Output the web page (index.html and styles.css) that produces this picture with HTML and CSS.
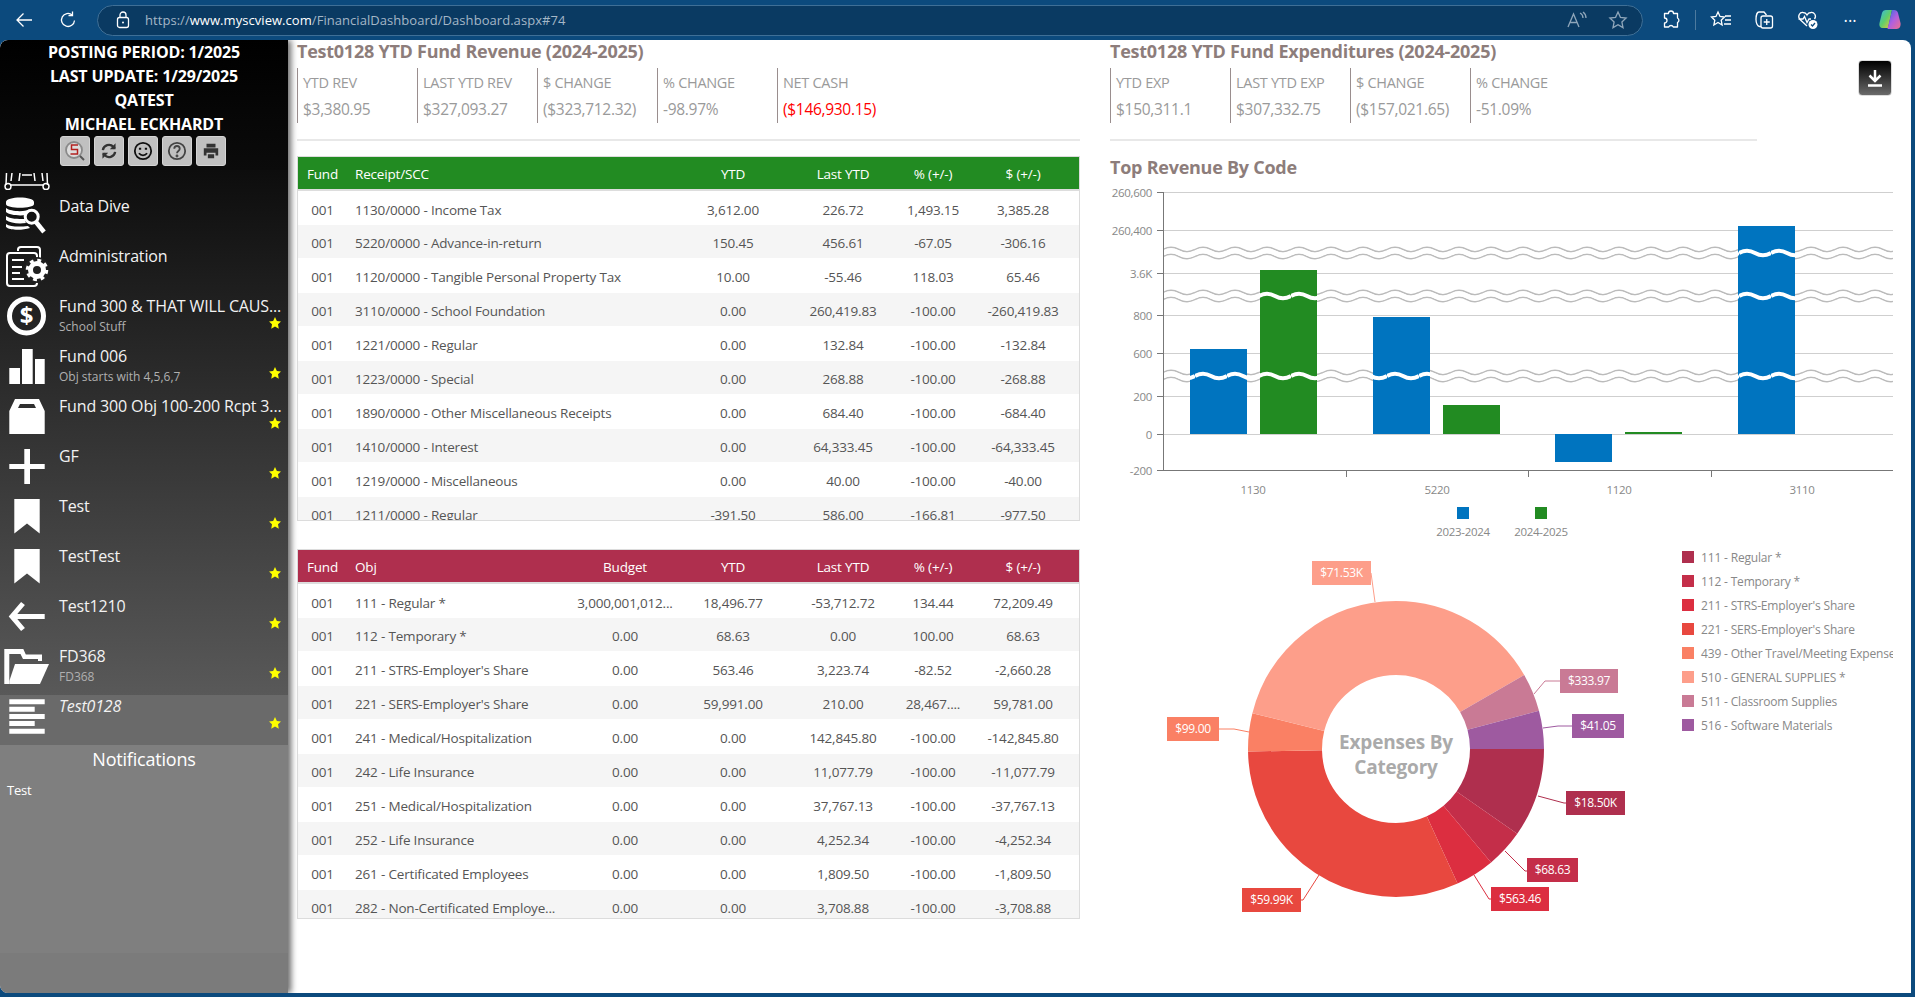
FILE: index.html
```html
<!DOCTYPE html>
<html lang="en">
<head>
<meta charset="utf-8">
<title>Financial Dashboard</title>
<link rel="stylesheet" href="styles.css">
</head>
<body>
<header class="browser">
  <svg class="bicon back" width="20" height="20" viewBox="0 0 20 20"><path d="M18 10H3M9.500 3.500 3 10l6.500 6.500"/></svg>
  <svg class="bicon reload" width="20" height="20" viewBox="0 0 20 20"><path d="M16.500 10.500a6.500 6.500 0 1 1-2.300-5.500M14.500 1.500v4h-4"/></svg>
  <div class="address">
    <svg class="bicon lock" width="16" height="18" viewBox="0 0 16 18"><rect x="2.500" y="6.500" width="11" height="10" rx="2"/><path d="M5 6.500V4a3 3 0 0 1 6 0v2.500"/><circle cx="8" cy="11.500" r="1" class="solid"/></svg>
    <span class="url"><span class="dim">https://</span><span class="host">www.myscview.com</span><span class="dim">/FinancialDashboard/Dashboard.aspx#74</span></span>
    <svg class="bicon faint read" width="22" height="20" viewBox="0 0 22 20"><path d="M2 17 7.500 4 13 17M4 12.500h7M14 3c2 1 3 3 3 5M17 2c2 1.500 3 3.500 3 6"/></svg>
    <svg class="bicon faint" width="20" height="20" viewBox="0 0 20 20"><path d="m10 2 2.400 5.300 5.700.7-4.200 3.900 1.100 5.700-5-2.900-5 2.900 1.100-5.700L1.900 8l5.700-.7z"/></svg>
  </div>
  <svg class="bicon ext" width="20" height="20" viewBox="0 0 20 20"><path d="M7.500 3.500a2.500 2.500 0 0 1 5 0h4v4.500a2.500 2.500 0 0 1 0 4.500V17h-4.200a2.500 2.500 0 0 0-4.600 0H3.500v-4a2.500 2.500 0 0 0 0-5V3.500z" stroke-linejoin="round"/></svg>
  <span class="bsep"></span>
  <svg class="bicon fav" width="22" height="20" viewBox="0 0 22 20"><path d="m8 2 2 4.500 4.500.5-3.300 3.200.9 4.800L8 12.500 3.900 15l.9-4.800L1.500 7 6 6.500zM15 6h6M15 10h6M14 14h7"/></svg>
  <svg class="bicon coll" width="20" height="20" viewBox="0 0 20 20"><path d="M7 16.500H5.500C3.500 16.500 2 13 2 9.500S3 2 5 2h5l2.500 3"/><rect x="7" y="6" width="11.500" height="12" rx="2"/><path d="M12.750 9v6M9.750 12h6"/></svg>
  <svg class="bicon heart" width="22" height="20" viewBox="0 0 22 20"><path d="M10 16 3 9.500C0 6 3 2 6 2.500c2 0 3.500 1.500 4 2.500.5-1 2-2.500 4-2.500 3-.5 6 3 3.500 6.500M1.500 9H6l1.500-2.500 2.500 6L12 9h2"/><circle cx="16" cy="14.500" r="4.500" class="solid"/><path d="m14 14.500 1.500 1.500 2.500-3" stroke="#0c4a7d"/></svg>
  <span class="dots">•••</span>
  <svg class="copilot" width="24" height="24" viewBox="0 0 24 24"><defs><linearGradient id="cpa" x1="0" y1="0" x2="1" y2="1"><stop offset="0" stop-color="#37b8e8"/><stop offset=".5" stop-color="#5fce6a"/><stop offset="1" stop-color="#f5c33b"/></linearGradient><linearGradient id="cpb" x1="0" y1="0" x2="1" y2="1"><stop offset="0" stop-color="#2f6fe0"/><stop offset=".5" stop-color="#b05fe0"/><stop offset="1" stop-color="#f0708a"/></linearGradient></defs><path d="M8 2h6l-4 18H5C2 20 1 18 1.500 15L4 5c.5-2 2-3 4-3z" fill="url(#cpa)"/><path d="M14 2h2c2 0 3.500 1 4 3l2.500 10c.5 3-1 6-4 6h-9z" fill="url(#cpb)"/></svg>
</header>

<div class="app">
  <aside class="sidebar">
    <div class="who">
      <div>POSTING PERIOD: 1/2025</div>
      <div>LAST UPDATE: 1/29/2025</div>
      <div>QATEST</div>
      <div>MICHAEL ECKHARDT</div>
      <div class="tools">
        <span class="tool"><svg width="24" height="26" viewBox="0 0 24 26"><circle cx="11" cy="12" r="8" fill="#ddd" stroke="#8a8a8a" stroke-width="1.800"/><path d="M15 7H8.500v4.500h6V16H7.500" fill="none" stroke="#b3201f" stroke-width="1.500"/><path d="m17 18 4 4" stroke="#555" stroke-width="2"/></svg></span>
        <span class="tool"><svg width="18" height="18" viewBox="0 0 22 22" fill="none" stroke="#333" stroke-width="2.800"><path d="M3.500 10a7.500 7.500 0 0 1 13-4l1.500 2M18.500 12a7.500 7.500 0 0 1-13 4l-1.500-2"/><path d="M19 1.500V9h-7zM3 20.500V13h7z" fill="#333" stroke="none"/></svg></span>
        <span class="tool"><svg width="20" height="20" viewBox="0 0 22 22" fill="none" stroke="#111" stroke-width="2"><circle cx="11" cy="11" r="9"/><path d="M6.500 13.500c2.500 3 6.500 3 9 0M6.500 8.500h2.500M13 8.500h2.500"/></svg></span>
        <span class="tool"><svg width="20" height="20" viewBox="0 0 22 22" fill="none" stroke="#444" stroke-width="2"><circle cx="11" cy="11" r="9"/><path d="M8 8.500c0-4 6-4 6 0 0 2.500-3 2.500-3 5"/><circle cx="11" cy="16.500" r=".6"/></svg></span>
        <span class="tool"><svg width="18" height="18" viewBox="0 0 20 20" fill="#333"><path d="M5 2h10v4H5zM2 7h16v8h-3v-3H5v3H2zM6.500 13.500h7V18h-7z"/></svg></span>
      </div>
    </div>
    <nav class="menu">
      <div class="clipped"><svg width="46" height="17" viewBox="0 0 46 17" fill="none" stroke="#fff" stroke-width="1.500"><path d="M2.500 0 2 12M43 0l.5 12M8 0 7 8M38 0l1 8M18 2h10M7 12h32M16 0l-1 8M30 0l1 8"/><circle cx="4" cy="13.500" r="3"/><circle cx="42" cy="13.500" r="3"/></svg></div>
      <a class="item">
        <svg class="ic" width="50" height="50" viewBox="0 0 50 50"><path fill="#fff" d="M3 7c0-6 28-6 28 0v2c0 5-28 5-28 0zM3 13c5 4 20 4 25 1a11 11 0 0 0-5 6c-7 1-17 0-20-3zM3 21c4 3 12 3 19 3 0 2 .5 3 1 4-8 1-16 0-20-3zM3 29c4 3 14 3 22 2l2 2c-9 3-21 2-24-1z"/><circle cx="28.700" cy="21.700" r="6.500" fill="none" stroke="#fff" stroke-width="3"/><path d="m33 27 8 10" stroke="#fff" stroke-width="4.500"/></svg>
        <div class="txt"><div class="name">Data Dive</div></div>
      </a>
      <a class="item">
        <svg class="ic" width="50" height="50" viewBox="0 0 50 50" fill="none" stroke="#fff" stroke-width="2"><path d="M15 6V4.500C15 3 16 2 18 2h16c2 0 3 1 3 3v8"/><rect x="4" y="8" width="30" height="33" rx="3"/><path d="M9 15h12M9 22h10M9 28h8M9 34h12"/><circle cx="34" cy="25" r="13" fill="#1f1f1f" stroke="none"/><circle cx="34" cy="25" r="6.500" stroke-width="5"/><circle cx="34" cy="25" r="9.500" stroke-width="3.500" stroke-dasharray="3.730 3.730"/></svg>
        <div class="txt"><div class="name">Administration</div></div>
      </a>
      <a class="item">
        <svg class="ic" width="50" height="50" viewBox="0 0 50 50"><circle cx="23.500" cy="21" r="17" fill="none" stroke="#fff" stroke-width="5"/><text x="23.500" y="29" text-anchor="middle" class="dollar">$</text></svg>
        <div class="txt"><div class="name">Fund 300 &amp; THAT WILL CAUS...</div><div class="sub">School Stuff</div></div>
        <svg class="star" width="12" height="12" viewBox="0 0 24 24"><path d="m12 0 3.700 7.800 8.300 1-6 5.900 1.500 8.800-7.500-4.300-7.500 4.300L6 14.700 0 8.800l8.300-1z"/></svg>
      </a>
      <a class="item">
        <svg class="ic" width="50" height="50" viewBox="0 0 50 50" fill="#fff"><path d="M6.300 23H17v16H6.300zM19 4h10.700v35H19zM32 14h9.700v25H32z"/></svg>
        <div class="txt"><div class="name">Fund 006</div><div class="sub">Obj starts with 4,5,6,7</div></div>
        <svg class="star" width="12" height="12" viewBox="0 0 24 24"><path d="m12 0 3.700 7.800 8.300 1-6 5.900 1.500 8.800-7.500-4.300-7.500 4.300L6 14.700 0 8.800l8.300-1z"/></svg>
      </a>
      <a class="item">
        <svg class="ic" width="50" height="50" viewBox="0 0 50 50" fill="#fff"><path fill-rule="evenodd" d="M6.300 39V16L12 4h24l5.700 12v23zM15 13h18l-2-4H17z"/></svg>
        <div class="txt"><div class="name">Fund 300 Obj 100-200 Rcpt 3...</div></div>
        <svg class="star" width="12" height="12" viewBox="0 0 24 24"><path d="m12 0 3.700 7.800 8.300 1-6 5.900 1.500 8.800-7.500-4.300-7.500 4.300L6 14.700 0 8.800l8.300-1z"/></svg>
      </a>
      <a class="item">
        <svg class="ic" width="50" height="50" viewBox="0 0 50 50" fill="#fff"><path d="M21.300 4H27v15h14.700v5H27v15h-5.700V24H6.300v-5h15z"/></svg>
        <div class="txt"><div class="name">GF</div></div>
        <svg class="star" width="12" height="12" viewBox="0 0 24 24"><path d="m12 0 3.700 7.800 8.300 1-6 5.900 1.500 8.800-7.500-4.300-7.500 4.300L6 14.700 0 8.800l8.300-1z"/></svg>
      </a>
      <a class="item">
        <svg class="ic" width="50" height="50" viewBox="0 0 50 50" fill="#fff"><path d="M11.300 4h25.400v34.500L24 28.500l-12.700 10z"/></svg>
        <div class="txt"><div class="name">Test</div></div>
        <svg class="star" width="12" height="12" viewBox="0 0 24 24"><path d="m12 0 3.700 7.800 8.300 1-6 5.900 1.500 8.800-7.500-4.300-7.500 4.300L6 14.700 0 8.800l8.300-1z"/></svg>
      </a>
      <a class="item">
        <svg class="ic" width="50" height="50" viewBox="0 0 50 50" fill="#fff"><path d="M11.300 4h25.400v34.500L24 28.500l-12.700 10z"/></svg>
        <div class="txt"><div class="name">TestTest</div></div>
        <svg class="star" width="12" height="12" viewBox="0 0 24 24"><path d="m12 0 3.700 7.800 8.300 1-6 5.900 1.500 8.800-7.500-4.300-7.500 4.300L6 14.700 0 8.800l8.300-1z"/></svg>
      </a>
      <a class="item">
        <svg class="ic" width="50" height="50" viewBox="0 0 50 50" fill="none" stroke="#fff" stroke-width="5"><path d="M41.700 21.500H11M20 8.500 9 21.500l11 13"/></svg>
        <div class="txt"><div class="name">Test1210</div></div>
        <svg class="star" width="12" height="12" viewBox="0 0 24 24"><path d="m12 0 3.700 7.800 8.300 1-6 5.900 1.500 8.800-7.500-4.300-7.500 4.300L6 14.700 0 8.800l8.300-1z"/></svg>
      </a>
      <a class="item">
        <svg class="ic" width="50" height="50" viewBox="0 0 50 50" fill="#fff"><path fill-rule="evenodd" d="M1.300 4h19l2.500 5.500H39V16h-4v-2H20l-2.500-5H6.300v30h-5z"/><path d="M12 19h34L37 39H6.300v-3z"/></svg>
        <div class="txt"><div class="name">FD368</div><div class="sub">FD368</div></div>
        <svg class="star" width="12" height="12" viewBox="0 0 24 24"><path d="m12 0 3.700 7.800 8.300 1-6 5.900 1.500 8.800-7.500-4.300-7.500 4.300L6 14.700 0 8.800l8.300-1z"/></svg>
      </a>
      <a class="item selected">
        <svg class="ic" width="50" height="50" viewBox="0 0 50 50" fill="#fff"><path d="M6.300 4.300h35.400v5H6.300zM6.300 11.700h25.400v5H6.300zM6.300 19h35.400v5H6.300zM6.300 26h25.400v5H6.300zM6.300 33.700h35.400v5H6.300z"/></svg>
        <div class="txt"><div class="name">Test0128</div></div>
        <svg class="star" width="12" height="12" viewBox="0 0 24 24"><path d="m12 0 3.700 7.800 8.300 1-6 5.900 1.500 8.800-7.500-4.300-7.500 4.300L6 14.700 0 8.800l8.300-1z"/></svg>
      </a>
    </nav>
    <section class="notes">
      <h3>Notifications</h3>
      <p>Test</p>
    </section>
    <div class="foot"></div>
  </aside>

  <main class="main">
    <button class="download" type="button" aria-label="Download"><svg width="18" height="20" viewBox="0 0 18 20" fill="none" stroke="#fff" stroke-width="2.500"><path d="M9 2v10M3.500 7.500 9 13l5.500-5.500M2 17.500h14"/></svg></button>
    <section class="col">
      <h2>Test0128 YTD Fund Revenue (2024-2025)</h2>
      <div class="stats">
        <div class="stat"><div>YTD REV</div><div>$3,380.95</div></div>
        <div class="stat"><div>LAST YTD REV</div><div>$327,093.27</div></div>
        <div class="stat"><div>$ CHANGE</div><div>($323,712.32)</div></div>
        <div class="stat"><div>% CHANGE</div><div>-98.97%</div></div>
        <div class="stat"><div>NET CASH</div><div class="neg">($146,930.15)</div></div>
      </div>
      <div class="rule"></div>
      <div class="tablewrap rev">
        <table>
          <colgroup><col class="c-fund"><col class="c-wide"><col class="c-ytd"><col class="c-last"><col class="c-pct"><col class="c-amt"></colgroup>
          <thead class="green"><tr><th>Fund</th><th class="l">Receipt/SCC</th><th>YTD</th><th>Last YTD</th><th>% (+/-)</th><th>$ (+/-)</th></tr></thead>
          <tbody>
            <tr><td>001</td><td class="l">1130/0000 - Income Tax</td><td>3,612.00</td><td>226.72</td><td>1,493.15</td><td>3,385.28</td></tr>
            <tr><td>001</td><td class="l">5220/0000 - Advance-in-return</td><td>150.45</td><td>456.61</td><td>-67.05</td><td>-306.16</td></tr>
            <tr><td>001</td><td class="l">1120/0000 - Tangible Personal Property Tax</td><td>10.00</td><td>-55.46</td><td>118.03</td><td>65.46</td></tr>
            <tr><td>001</td><td class="l">3110/0000 - School Foundation</td><td>0.00</td><td>260,419.83</td><td>-100.00</td><td>-260,419.83</td></tr>
            <tr><td>001</td><td class="l">1221/0000 - Regular</td><td>0.00</td><td>132.84</td><td>-100.00</td><td>-132.84</td></tr>
            <tr><td>001</td><td class="l">1223/0000 - Special</td><td>0.00</td><td>268.88</td><td>-100.00</td><td>-268.88</td></tr>
            <tr><td>001</td><td class="l">1890/0000 - Other Miscellaneous Receipts</td><td>0.00</td><td>684.40</td><td>-100.00</td><td>-684.40</td></tr>
            <tr><td>001</td><td class="l">1410/0000 - Interest</td><td>0.00</td><td>64,333.45</td><td>-100.00</td><td>-64,333.45</td></tr>
            <tr><td>001</td><td class="l">1219/0000 - Miscellaneous</td><td>0.00</td><td>40.00</td><td>-100.00</td><td>-40.00</td></tr>
            <tr><td>001</td><td class="l">1211/0000 - Regular</td><td>-391.50</td><td>586.00</td><td>-166.81</td><td>-977.50</td></tr>
          </tbody>
        </table>
      </div>
      <div class="tablewrap exp">
        <table>
          <colgroup><col class="c-fund"><col class="c-name"><col class="c-bud"><col class="c-ytd"><col class="c-last"><col class="c-pct"><col class="c-amt"></colgroup>
          <thead class="rose"><tr><th>Fund</th><th class="l">Obj</th><th>Budget</th><th>YTD</th><th>Last YTD</th><th>% (+/-)</th><th>$ (+/-)</th></tr></thead>
          <tbody>
            <tr><td>001</td><td class="l">111 - Regular *</td><td>3,000,001,012...</td><td>18,496.77</td><td>-53,712.72</td><td>134.44</td><td>72,209.49</td></tr>
            <tr><td>001</td><td class="l">112 - Temporary *</td><td>0.00</td><td>68.63</td><td>0.00</td><td>100.00</td><td>68.63</td></tr>
            <tr><td>001</td><td class="l">211 - STRS-Employer's Share</td><td>0.00</td><td>563.46</td><td>3,223.74</td><td>-82.52</td><td>-2,660.28</td></tr>
            <tr><td>001</td><td class="l">221 - SERS-Employer's Share</td><td>0.00</td><td>59,991.00</td><td>210.00</td><td>28,467....</td><td>59,781.00</td></tr>
            <tr><td>001</td><td class="l">241 - Medical/Hospitalization</td><td>0.00</td><td>0.00</td><td>142,845.80</td><td>-100.00</td><td>-142,845.80</td></tr>
            <tr><td>001</td><td class="l">242 - Life Insurance</td><td>0.00</td><td>0.00</td><td>11,077.79</td><td>-100.00</td><td>-11,077.79</td></tr>
            <tr><td>001</td><td class="l">251 - Medical/Hospitalization</td><td>0.00</td><td>0.00</td><td>37,767.13</td><td>-100.00</td><td>-37,767.13</td></tr>
            <tr><td>001</td><td class="l">252 - Life Insurance</td><td>0.00</td><td>0.00</td><td>4,252.34</td><td>-100.00</td><td>-4,252.34</td></tr>
            <tr><td>001</td><td class="l">261 - Certificated Employees</td><td>0.00</td><td>0.00</td><td>1,809.50</td><td>-100.00</td><td>-1,809.50</td></tr>
            <tr><td>001</td><td class="l">282 - Non-Certificated Employe...</td><td>0.00</td><td>0.00</td><td>3,708.88</td><td>-100.00</td><td>-3,708.88</td></tr>
          </tbody>
        </table>
      </div>
    </section>

    <section class="col">
      <h2>Test0128 YTD Fund Expenditures (2024-2025)</h2>
      <div class="stats">
        <div class="stat"><div>YTD EXP</div><div>$150,311.1</div></div>
        <div class="stat"><div>LAST YTD EXP</div><div>$307,332.75</div></div>
        <div class="stat"><div>$ CHANGE</div><div>($157,021.65)</div></div>
        <div class="stat"><div>% CHANGE</div><div>-51.09%</div></div>
      </div>
      <div class="rule short"></div>
      <h2 class="chart-title">Top Revenue By Code</h2>
      <svg class="chart" width="783" height="360" viewBox="1110 185 783 360">
        <defs>
          <pattern id="waveGrey" patternUnits="userSpaceOnUse" x="1163" y="-10" width="32" height="20">
            <path d="M0 6.500q8-4.500 16 0t16 0M0 13.500q8-4.500 16 0t16 0" fill="none" stroke="#bbb" stroke-width="1.500"/>
            <path d="M0 10q8-4.500 16 0t16 0" fill="none" stroke="#fff" stroke-width="5"/>
          </pattern>
          <pattern id="waveWhite" patternUnits="userSpaceOnUse" x="1163" y="-10" width="32" height="20">
            <path d="M0 10q8-4.500 16 0t16 0" fill="none" stroke="#fff" stroke-width="4"/>
          </pattern>
        </defs>
        <g class="grid">
          <path d="M1163 192.500H1893M1163 230.500H1893M1163 273.500H1893M1163 315.500H1893M1163 353.500H1893M1163 396.500H1893M1163 434.500H1893"/>
        </g>
        <rect transform="translate(0 253)" x="1163" y="-10" width="730" height="20" fill="url(#waveGrey)"/>
        <rect transform="translate(0 296)" x="1163" y="-10" width="730" height="20" fill="url(#waveGrey)"/>
        <rect transform="translate(0 376)" x="1163" y="-10" width="730" height="20" fill="url(#waveGrey)"/>
        <g class="blue">
          <rect x="1190" y="349" width="57" height="85"/>
          <rect x="1373" y="317" width="57" height="117"/>
          <rect x="1555" y="434" width="57" height="28"/>
          <rect x="1738" y="226" width="57" height="208"/>
        </g>
        <g class="grn">
          <rect x="1260" y="270" width="57" height="164"/>
          <rect x="1443" y="405" width="57" height="29"/>
          <rect x="1625" y="432" width="57" height="2"/>
        </g>
        <rect transform="translate(0 253)" x="1163" y="-10" width="730" height="20" fill="url(#waveWhite)"/>
        <rect transform="translate(0 296)" x="1163" y="-10" width="730" height="20" fill="url(#waveWhite)"/>
        <rect transform="translate(0 376)" x="1163" y="-10" width="730" height="20" fill="url(#waveWhite)"/>
        <path class="axis" d="M1157 192.500h6.500M1157 230.500h6.500M1157 273.500h6.500M1157 315.500h6.500M1157 353.500h6.500M1157 396.500h6.500M1157 434.500h6.500M1157 470.500H1893M1163.500 192V471M1346.500 471v6M1528.500 471v6M1711.500 471v6"/>
        <g class="ylab">
          <text x="1152" y="196.500">260,600</text>
          <text x="1152" y="234.500">260,400</text>
          <text x="1152" y="277.500">3.6K</text>
          <text x="1152" y="319.500">800</text>
          <text x="1152" y="357.500">600</text>
          <text x="1152" y="400.500">200</text>
          <text x="1152" y="438.500">0</text>
          <text x="1152" y="474.500">-200</text>
        </g>
        <g class="xlab">
          <text x="1253" y="494">1130</text>
          <text x="1437" y="494">5220</text>
          <text x="1619" y="494">1120</text>
          <text x="1802" y="494">3110</text>
          <text x="1463" y="536">2023-2024</text>
          <text x="1541" y="536">2024-2025</text>
        </g>
        <rect class="sq-blue" x="1457" y="507" width="12" height="12"/>
        <rect class="sq-green" x="1535" y="507" width="12" height="12"/>
      </svg>
      <svg class="donut" width="783" height="385" viewBox="1110 545 783 385">
        <g class="slices">
          <circle cx="1396" cy="749" r="111" pathLength="360" stroke="#af2f4e" stroke-dasharray="35 325" stroke-dashoffset="0"/>
          <circle cx="1396" cy="749" r="111" pathLength="360" stroke="#c42e49" stroke-dasharray="15 345" stroke-dashoffset="-35"/>
          <circle cx="1396" cy="749" r="111" pathLength="360" stroke="#dc2e40" stroke-dasharray="15.400 344.600" stroke-dashoffset="-50"/>
          <circle cx="1396" cy="749" r="111" pathLength="360" stroke="#e8483f" stroke-dasharray="113.600 246.400" stroke-dashoffset="-65.400"/>
          <circle cx="1396" cy="749" r="111" pathLength="360" stroke="#fa8064" stroke-dasharray="15 345" stroke-dashoffset="-179"/>
          <circle cx="1396" cy="749" r="111" pathLength="360" stroke="#fd9e8a" stroke-dasharray="136 224" stroke-dashoffset="-194"/>
          <circle cx="1396" cy="749" r="111" pathLength="360" stroke="#c97a95" stroke-dasharray="15 345" stroke-dashoffset="-330"/>
          <circle cx="1396" cy="749" r="111" pathLength="360" stroke="#9e5aa0" stroke-dasharray="15 345" stroke-dashoffset="-345"/>
        </g>
        <g class="leaders">
          <path stroke="#fd9e8a" d="M1371 573 1375 602"/>
          <path stroke="#c97a95" d="M1560 681H1545L1534 694"/>
          <path stroke="#9e5aa0" d="M1572 726H1558L1543 728"/>
          <path stroke="#af2f4e" d="M1566 803H1564L1538 796"/>
          <path stroke="#c42e49" d="M1527 871H1525L1505 851"/>
          <path stroke="#dc2e40" d="M1491 899H1489L1474 875"/>
          <path stroke="#e8483f" d="M1301 900H1303L1319 875"/>
          <path stroke="#fa8064" d="M1219 729H1234L1249 732"/>
        </g>
        <text class="center" x="1396" y="749"><tspan x="1396" dy="0">Expenses By</tspan><tspan x="1396" dy="25">Category</tspan></text>
        <g class="tag">
          <rect x="1312" y="561" width="59" height="24" fill="#fd9e8a"/><text x="1341.500" y="577">$71.53K</text>
          <rect x="1560" y="669" width="58" height="24" fill="#c97a95"/><text x="1589" y="685">$333.97</text>
          <rect x="1572" y="714" width="52" height="24" fill="#9e5aa0"/><text x="1598" y="730">$41.05</text>
          <rect x="1566" y="791" width="59" height="24" fill="#af2f4e"/><text x="1595.500" y="807">$18.50K</text>
          <rect x="1527" y="858" width="51" height="24" fill="#c42e49"/><text x="1552.500" y="874">$68.63</text>
          <rect x="1491" y="887" width="58" height="24" fill="#dc2e40"/><text x="1520" y="903">$563.46</text>
          <rect x="1242" y="888" width="59" height="24" fill="#e8483f"/><text x="1271.500" y="904">$59.99K</text>
          <rect x="1167" y="717" width="52" height="24" fill="#fa8064"/><text x="1193" y="733">$99.00</text>
        </g>
        <g class="legend">
          <rect x="1682" y="551" width="12" height="12" fill="#af2f4e"/><text x="1701" y="561.500">111 - Regular *</text>
          <rect x="1682" y="575" width="12" height="12" fill="#c42e49"/><text x="1701" y="585.500">112 - Temporary *</text>
          <rect x="1682" y="599" width="12" height="12" fill="#dc2e40"/><text x="1701" y="609.500">211 - STRS-Employer's Share</text>
          <rect x="1682" y="623" width="12" height="12" fill="#e8483f"/><text x="1701" y="633.500">221 - SERS-Employer's Share</text>
          <rect x="1682" y="647" width="12" height="12" fill="#fa8064"/><text x="1701" y="657.500">439 - Other Travel/Meeting Expense</text>
          <rect x="1682" y="671" width="12" height="12" fill="#fd9e8a"/><text x="1701" y="681.500">510 - GENERAL SUPPLIES *</text>
          <rect x="1682" y="695" width="12" height="12" fill="#c97a95"/><text x="1701" y="705.500">511 - Classroom Supplies</text>
          <rect x="1682" y="719" width="12" height="12" fill="#9e5aa0"/><text x="1701" y="729.500">516 - Software Materials</text>
        </g>
      </svg>
    </section>
  </main>
</div>
</body>
</html>
```

FILE: styles.css
```css
* { box-sizing: border-box; }
html, body { margin: 0; height: 100%; }
body {
  height: 997px;
  overflow: hidden;
  display: flex;
  flex-direction: column;
  background: #0c4a7d;
  font-family: "Open Sans", "Noto Sans", sans-serif;
}

/* browser chrome */
.browser {
  height: 40px;
  flex: none;
  display: flex;
  align-items: center;
  padding-left: 14px;
}
.bicon { fill: none; stroke: #fff; stroke-width: 1.3; flex: none; }
.bicon .solid { fill: #fff; stroke: none; }
.bicon.faint { stroke: #8fa6ba; }
.reload { margin-left: 24px; }
.address {
  margin-left: 19px;
  width: 1546px;
  height: 31px;
  display: flex;
  align-items: center;
  padding-left: 17px;
  padding-right: 14px;
  background: #0a3a62;
  border: 1px solid #3f6f96;
  border-radius: 16px;
}
.url { margin-left: 14px; flex: 1; font-size: 13px; letter-spacing: 0.05px; white-space: nowrap; }
.url .dim { color: #a5b7c7; }
.url .host { color: #fff; }
.read { margin-right: 20px; }
.ext { margin-left: 18px; }
.bsep { width: 1px; height: 20px; background: #4d7a9e; margin-left: 14px; }
.fav { margin-left: 14px; }
.coll { margin-left: 22px; }
.heart { margin-left: 23px; }
.dots { margin-left: 25px; color: #fff; font-size: 9px; letter-spacing: 1px; }
.copilot { margin-left: 21px; flex: none; }

/* app */
.app {
  flex: 1;
  min-height: 0;
  display: flex;
  margin-right: 4px;
  margin-bottom: 4px;
  background: #fff;
  border-radius: 8px 8px 0 8px;
  overflow: hidden;
}

/* sidebar */
.sidebar {
  width: 288px;
  flex: none;
  display: flex;
  flex-direction: column;
  color: #fff;
  background: #7f7f7f;
  box-shadow: 3px 0 6px rgba(0, 0, 0, .6);
  z-index: 2;
  border-radius: 8px 0 0 8px;
  overflow: hidden;
}
.who {
  height: 130px;
  flex: none;
  text-align: center;
  font-weight: 700;
  font-size: 16px;
  line-height: 24px;
  letter-spacing: -0.15px;
  background: linear-gradient(#000, #0b0b0b);
}
.tools { display: flex; justify-content: center; gap: 4px; padding-right: 2px; }
.tool {
  width: 30px;
  height: 30px;
  display: flex;
  align-items: center;
  justify-content: center;
  background: #c0c0c0;
  border: 1px solid #d4d4d4;
  border-radius: 3px;
}
.menu {
  height: 575px;
  flex: none;
  background: linear-gradient(#0d0d0d, #606060);
  overflow: hidden;
}
.clipped { height: 25px; padding: 3px 0 0 4px; }
.clipped svg { display: block; }
.item {
  position: relative;
  height: 50px;
  display: flex;
  padding-left: 3px;
}
.item.selected { background: #6a6a6a; font-style: italic; }
.ic { flex: none; }
.txt { margin-left: 6px; white-space: nowrap; }
.name { font-size: 16px; line-height: 22px; letter-spacing: -0.15px; font-weight: 400; color: #f2f2f2; }
.sub { font-size: 12px; line-height: 19px; color: #b0b0b0; }
.star { position: absolute; left: 269px; top: 22px; fill: #ffff00; }
.dollar { font-family: "Open Sans", sans-serif; font-weight: 700; font-size: 24px; fill: #fff; }
.notes { height: 208px; flex: none; background: #7f7f7f; }
.notes h3 { margin: 0; padding-top: 2px; text-align: center; font-size: 18px; line-height: 25px; font-weight: 400; letter-spacing: -0.2px; }
.notes p { margin: 9px 0 0 7px; font-size: 13px; line-height: 18px; letter-spacing: -0.2px; }
.foot { flex: 1; background: #7b7b7b; }

/* main */
.main {
  position: relative;
  flex: 1;
  display: flex;
  gap: 30px;
  padding-left: 9px;
  min-width: 0;
}
.col { width: 783px; flex: none; }
h2 {
  margin: 0;
  font-size: 18px;
  line-height: 22px;
  font-weight: 700;
  letter-spacing: -0.25px;
  color: #8d7d7b;
  white-space: nowrap;
}
.stats { display: flex; margin-top: 6px; height: 55px; }
.stat {
  width: 120px;
  border-left: 1px solid #9a8e8e;
  padding-left: 5px;
  color: #9a9a9a;
  font-size: 15.500px;
  line-height: 26px;
  letter-spacing: -0.3px;
  white-space: nowrap;
}
.stat div:first-child { font-size: 14.500px; margin-top: 2px; }
.stat .neg { color: #f00; }
.rule { height: 2px; margin-top: 16px; background: #e8e8e8; }
.rule.short { width: 647px; }
.tablewrap {
  margin-top: 15px;
  border: 1px solid #dcdcdc;
  height: 365px;
  overflow: hidden;
}
.tablewrap.exp { margin-top: 28px; height: 370px; }
table { width: 781px; border-collapse: collapse; table-layout: fixed; font-size: 13.500px; color: #555; letter-spacing: -0.18px; }
.c-fund { width: 49px; }
.c-wide { width: 332px; }
.c-name { width: 224px; }
.c-bud { width: 108px; }
.c-ytd { width: 108px; }
.c-last { width: 112px; }
.c-pct { width: 68px; }
.c-amt { width: 112px; }
th {
  height: 33px;
  padding: 1px 0 0;
  font-weight: 400;
  color: #fff;
  text-align: center;
}
thead tr { border-bottom: 2px solid #ddd; }
thead.green th { background: #228b22; }
thead.rose th { background: #af2f4e; }
td { height: 35px; padding: 3px 0 0; text-align: center; white-space: nowrap; overflow: hidden; }
tbody tr:nth-child(even) td { height: 33px; background: #f5f5f5; }
th.l, td.l { text-align: left; padding-left: 8px; }
.download {
  position: absolute;
  right: 19px;
  top: 20px;
  width: 34px;
  height: 36px;
  padding: 0;
  display: flex;
  align-items: center;
  justify-content: center;
  border: 1px solid #ddd;
  border-radius: 4px;
  background: linear-gradient(#000, #6a6a6a);
}
.chart-title { margin-top: 15px; height: 22px; }
.chart, .donut { display: block; }
.chart { margin-top: 7px; }
.grid path { stroke: #cfcfcf; stroke-width: 1; fill: none; }
.blue rect, .sq-blue { fill: #0074bf; }
.grn rect, .sq-green { fill: #228b22; }
.axis { stroke: #777; stroke-width: 1; fill: none; }
.ylab text { text-anchor: end; font-size: 11.500px; fill: #888; letter-spacing: -0.3px; }
.xlab text { text-anchor: middle; font-size: 11.500px; fill: #888; letter-spacing: -0.3px; }
.slices circle { fill: none; stroke-width: 74; }
.leaders path { fill: none; stroke-width: 1; }
.center { text-anchor: middle; font-size: 19px; font-weight: 700; fill: #aaa; letter-spacing: -0.2px; }
.tag text { text-anchor: middle; fill: #fff; font-size: 12px; letter-spacing: -0.3px; }
.legend text { font-size: 12px; fill: #888; letter-spacing: -0.17px; }
```
